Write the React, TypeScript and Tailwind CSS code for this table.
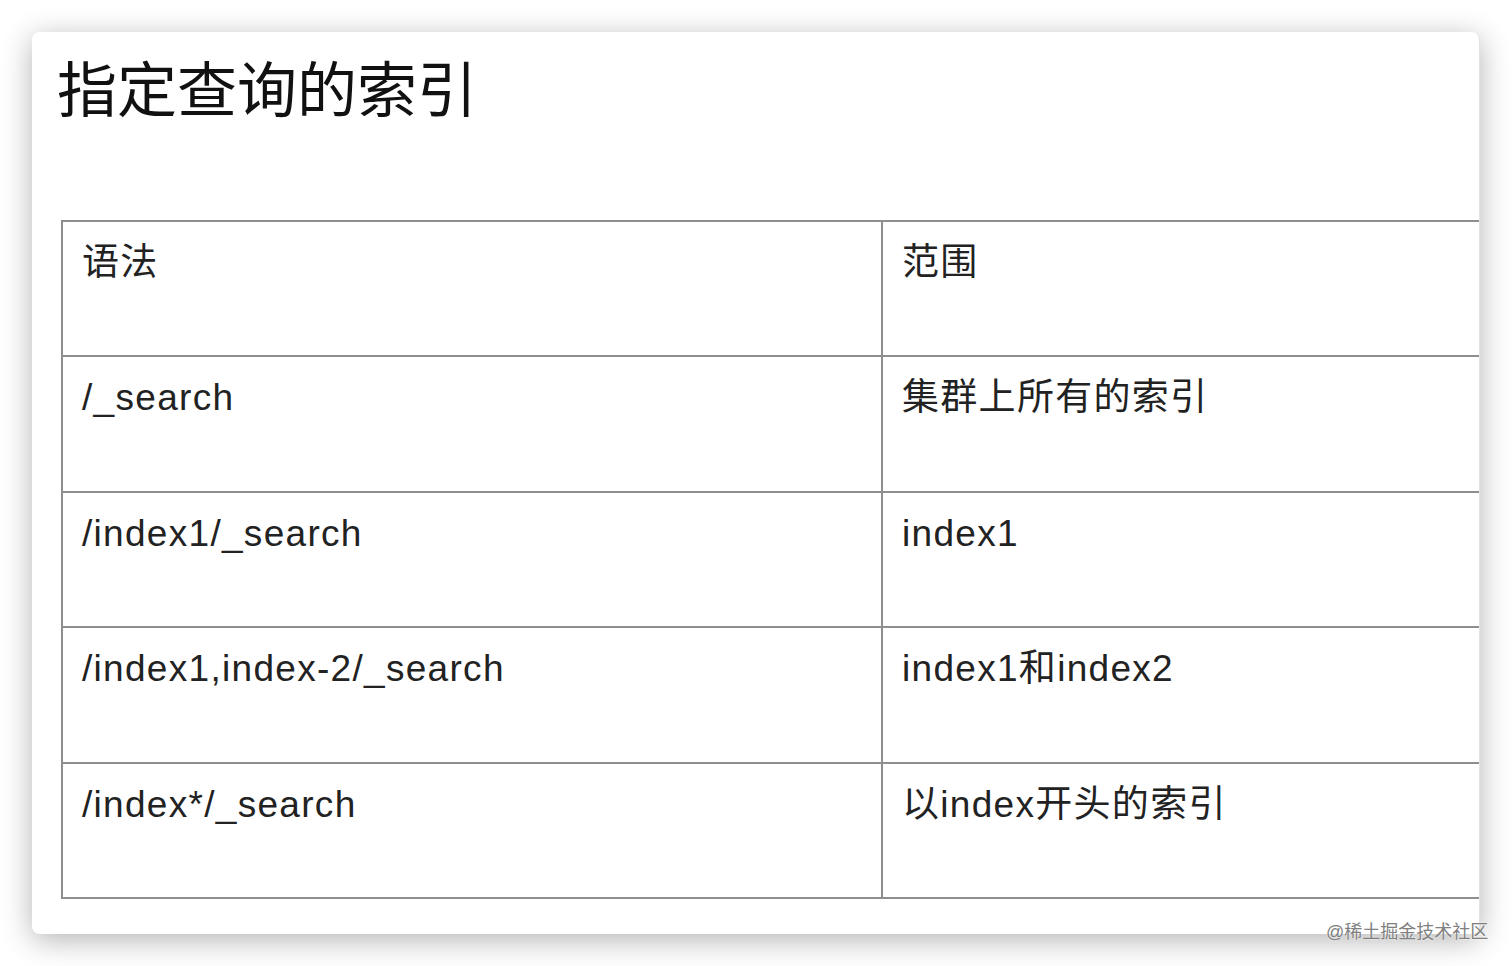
const rows: [string, string][] = [
  ["语法", "范围"],
  ["/_search", "集群上所有的索引"],
  ["/index1/_search", "index1"],
  ["/index1,index-2/_search", "index1和index2"],
  ["/index*/_search", "以index开头的索引"],
];

const font = "font-['Liberation_Sans','Noto_Sans_CJK_SC',sans-serif]";

export default function App() {
  return (
    <div className={`relative h-[966px] w-[1512px] overflow-hidden bg-white ${font}`}>
      <div className="pl-[32px] pt-[32px]">
        <div className="h-[902px] w-[1448px] overflow-hidden rounded-[8px] border-r border-[#e2e2e2] bg-white shadow-[0_6px_30px_rgba(0,0,0,0.3)]">
          <h1 className="pl-[25px] pt-[24px] text-[60px] leading-[1.2] font-normal text-[#111]">指定查询的索引</h1>
          <div className="ml-[29px] mt-[92px] w-[1500px] border-t-2 border-l-2 border-[#8e8e8e]">
            {rows.map(([a, b], i) => (
              <div key={i} className="grid h-[135.4px] grid-cols-[820px_1fr] border-b-2 border-[#8e8e8e]">
                <div className="border-r-2 border-[#8e8e8e] pl-[19px] pt-[19px] text-[37px] leading-[1.2] tracking-[1.3px] text-[#222]">
                  {a}
                </div>
                <div className="pl-[19px] pt-[19px] text-[37px] leading-[1.2] tracking-[1.3px] text-[#222]">{b}</div>
              </div>
            ))}
          </div>
        </div>
      </div>
      <div className="absolute left-[1326px] top-[920px] text-[18px] leading-[24px] text-[#808080] [text-shadow:0_0_2px_#fff]">
        @稀土掘金技术社区
      </div>
    </div>
  );
}
